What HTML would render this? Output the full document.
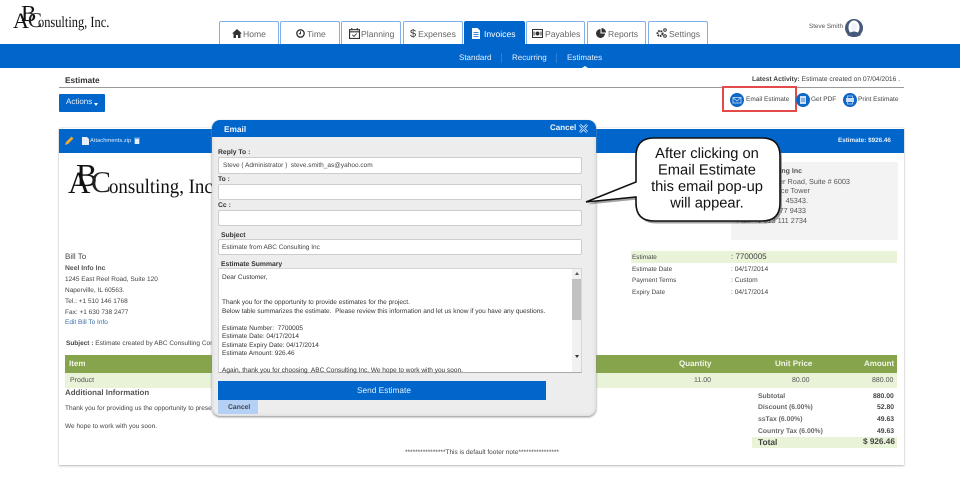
<!DOCTYPE html>
<html><head><meta charset="utf-8"><style>
html,body{margin:0;padding:0;background:#fff}
#p{position:relative;width:960px;height:497px;overflow:hidden;background:#fff;font-family:"Liberation Sans",sans-serif;color:#444;font-size:6.5px;text-rendering:geometricPrecision;filter:blur(.3px)}
#p div,#p span.a,#p svg{position:absolute}
.t{white-space:nowrap;line-height:10px}
.tab{top:21px;height:23px;box-sizing:border-box;border:1px solid #7fb0e8;border-bottom:0;border-radius:2px 2px 0 0;background:#fff;color:#666;font-size:8.6px;line-height:25px;white-space:nowrap}
.in{background:#fff;border:1px solid #cdcdcd;box-sizing:border-box;border-radius:2px;left:218px;width:364px;color:#444;font-size:6.5px;line-height:16px;padding-left:3px;white-space:nowrap}
.lb{font-weight:bold;font-size:6.8px;color:#333;white-space:nowrap;line-height:10px}
.ta{white-space:nowrap;font-size:6.5px;line-height:8.6px;color:#333}
</style></head><body><div id="p">

<!-- top logo -->
<div class="t" style="left:13px;top:10px;font:22px/22px 'Liberation Serif',serif;color:#111">A</div>
<div class="t" style="left:21px;top:2px;font:23px/23px 'Liberation Serif',serif;color:#111">B</div>
<div class="t" style="left:28px;top:9px;font:21px/22px 'Liberation Serif',serif;color:#222">C</div>
<div class="t" style="left:38px;top:13px;font:15.5px/19px 'Liberation Serif',serif;color:#111;transform:scaleX(.8);transform-origin:0 0">onsulting, Inc.</div>

<!-- tabs -->
<div class="tab" style="left:219px;width:60px"><svg style="left:12px;top:7px" width="10" height="9" viewBox="0 0 10 9"><path d="M5 0L0 4.500H1.500V9H4V6H6V9H8.500V4.500H10Z" fill="#333"/></svg><span style="margin-left:23px">Home</span></div>
<div class="tab" style="left:280px;width:60px"><svg style="left:15px;top:7px" width="9" height="9" viewBox="0 0 9 9"><circle cx="4.500" cy="4.500" r="3.700" fill="none" stroke="#333" stroke-width="1.300"/><path d="M4.500 2.300V4.700H2.800" fill="none" stroke="#333"/></svg><span style="margin-left:26px">Time</span></div>
<div class="tab" style="left:341px;width:60px"><svg style="left:7px;top:6px" width="11" height="11" viewBox="0 0 10 10"><rect x=".5" y="1.500" width="9" height="8" fill="none" stroke="#333"/><path d="M.5 3.500H9.500M2.500 0V2M7.500 0V2" stroke="#333"/><path d="M3 6.200L4.500 7.700L7 5" fill="none" stroke="#333" stroke-width=".8"/></svg><span style="margin-left:19px">Planning</span></div>
<div class="tab" style="left:403px;width:60px"><span style="margin-left:6px;font-size:11px;color:#333">$</span><span style="margin-left:2px">Expenses</span></div>
<div class="tab" style="left:464px;width:61px;background:#0066cc;border-color:#0066cc;color:#fff"><svg style="left:7px;top:6px" width="8" height="11" viewBox="0 0 8 11"><path d="M0 0H5.500L8 2.500V11H0Z" fill="#fff"/><path d="M1.500 4.500H6.500M1.500 6.500H6.500M1.500 8.500H6.500" stroke="#0066cc" stroke-width=".7"/></svg><span style="margin-left:19px">Invoices</span></div>
<div class="tab" style="left:526px;width:59px"><svg style="left:5px;top:7px" width="11" height="9" viewBox="0 0 11 9"><rect x=".5" y=".5" width="10" height="8" fill="none" stroke="#333"/><circle cx="5.500" cy="4.500" r="2" fill="#333"/><path d="M2 2.500V6.500M9 2.500V6.500" stroke="#333"/></svg><span style="margin-left:18px">Payables</span></div>
<div class="tab" style="left:587px;width:59px"><svg style="left:8px;top:6px" width="10" height="10" viewBox="0 0 10 10"><path d="M4.500 1A4.500 4.500 0 1 0 9 5.500H4.500Z" fill="#333"/><path d="M5.500 0A4.500 4.500 0 0 1 10 4.500H5.500Z" fill="#333"/></svg><span style="margin-left:20px">Reports</span></div>
<div class="tab" style="left:648px;width:60px"><svg style="left:7px;top:6px" width="11" height="10" viewBox="0 0 11 10"><circle cx="4" cy="5.500" r="2.500" fill="none" stroke="#333" stroke-width="2" stroke-dasharray="1.600 .8"/><circle cx="9" cy="2" r="1.300" fill="none" stroke="#333"/><circle cx="9" cy="8" r="1.300" fill="none" stroke="#333"/></svg><span style="margin-left:20px">Settings</span></div>

<div class="t" style="left:809px;top:22px;font-size:6.3px;color:#555">Steve Smith</div>
<svg style="left:845px;top:19px" width="18" height="18" viewBox="0 0 18 18"><circle cx="9" cy="9" r="9" fill="#46597a"/><ellipse cx="9" cy="8.500" rx="5.500" ry="7" fill="#fff"/><path d="M2 16Q9 9 16 16Q9 20 2 16Z" fill="#46597a"/><ellipse cx="9" cy="8" rx="3" ry="4" fill="#eef1f6"/></svg>

<!-- blue bar -->
<div style="left:0;top:44px;width:960px;height:24px;background:#0066cc"></div>
<div class="t" style="left:459px;top:53px;color:#e6effa;font-size:8px">Standard</div>
<div style="left:501px;top:53px;width:1px;height:10px;background:#2a80d6"></div>
<div class="t" style="left:512px;top:53px;color:#e6effa;font-size:8px">Recurring</div>
<div style="left:556px;top:53px;width:1px;height:10px;background:#2a80d6"></div>
<div class="t" style="left:567px;top:53px;color:#e6effa;font-size:8px">Estimates</div>
<div style="left:582px;top:66px;width:0;height:0;border:3px solid transparent;border-top:0;border-bottom:2px solid #fff"></div>

<!-- title row -->
<div class="t" style="left:65px;top:75px;font-size:8.3px;font-weight:bold;color:#333">Estimate</div>
<div class="t" style="left:752px;top:75px;font-size:6.7px;color:#444"><b>Latest Activity:</b> Estimate created on 07/04/2016 .</div>
<div style="left:59px;top:87px;width:845px;height:1px;background:#999"></div>
<div style="left:59px;top:94px;width:46px;height:18px;background:#0066cc;border-radius:1px"></div>
<div class="t" style="left:66px;top:97px;color:#e6effa;font-size:8px">Actions</div>
<div style="left:94px;top:103px;width:0;height:0;border:2.5px solid transparent;border-top:3px solid #fff;border-bottom:0"></div>

<!-- red box + actions -->
<div style="left:722px;top:86px;width:75px;height:26px;box-sizing:border-box;border:2px solid #e44a4a"></div>
<svg style="left:730px;top:93px" width="14" height="14" viewBox="0 0 14 14"><circle cx="7" cy="7" r="7" fill="#0e66c6"/><rect x="3" y="4.500" width="8" height="5.500" fill="none" stroke="#cfe0f5" stroke-width=".8"/><path d="M3 4.500L7 8L11 4.500" fill="none" stroke="#cfe0f5" stroke-width=".8"/></svg>
<div class="t" style="left:746px;top:95px;font-size:6.5px;color:#444">Email Estimate</div>
<svg style="left:796px;top:93px" width="14" height="14" viewBox="0 0 14 14"><circle cx="7" cy="7" r="7" fill="#0e66c6"/><rect x="4" y="3" width="6" height="8" fill="#cfe0f5"/><path d="M5 6H9M5 8H9" stroke="#0e66c6" stroke-width=".8"/></svg>
<div class="t" style="left:811px;top:95px;font-size:6.5px;color:#444">Get PDF</div>
<svg style="left:843px;top:93px" width="14" height="14" viewBox="0 0 14 14"><circle cx="7" cy="7" r="7" fill="#0e66c6"/><rect x="3" y="5" width="8" height="4" fill="#cfe0f5"/><rect x="4.500" y="3" width="5" height="8" fill="none" stroke="#cfe0f5" stroke-width=".7"/></svg>
<div class="t" style="left:858px;top:95px;font-size:6.5px;color:#444">Print Estimate</div>

<!-- card -->
<div style="left:59px;top:128px;width:845px;height:337px;background:#fff;box-shadow:0 1px 2px #bbb,0 0 1px #ccc"></div>
<div style="left:59px;top:129px;width:845px;height:24px;background:#0066cc"></div>
<svg style="left:65px;top:136px" width="9" height="9" viewBox="0 0 9 9"><path d="M0 9L1 6L6.500 .5L8.500 2.500L3 8Z" fill="#f0a830"/></svg>
<svg style="left:82px;top:137px" width="7" height="8" viewBox="0 0 7 8"><path d="M0 0H5L7 2V8H0Z" fill="#e8eef8"/></svg>
<div class="t" style="left:90px;top:136px;color:#dfeaf8;font-size:5.8px">Attachments.zip</div>
<svg style="left:134px;top:137px" width="6" height="7" viewBox="0 0 6 7"><path d="M0 1H6M1 2H5V7H1Z" fill="#e8eef8" stroke="#e8eef8" stroke-width=".6"/></svg>
<div class="t" style="left:838px;top:136px;color:#e8f0fa;font-size:6.3px;font-weight:bold">Estimate: $926.46</div>

<!-- card logo -->
<div class="t" style="left:68px;top:168px;font:31px/30px 'Liberation Serif',serif;color:#111">A</div>
<div class="t" style="left:76px;top:159px;font:32px/33px 'Liberation Serif',serif;color:#111">B</div>
<div class="t" style="left:91px;top:167px;font:30px/32px 'Liberation Serif',serif;color:#222">C</div>
<div class="t" style="left:109px;top:175px;font:20.5px/24px 'Liberation Serif',serif;color:#111;transform:scaleX(.92);transform-origin:0 0">onsulting, Inc</div>

<!-- company box -->
<div style="left:731px;top:162px;width:167px;height:78px;background:#f3f3f3"></div>
<div class="t" style="right:158px;top:167px;font-size:7px;font-weight:bold;color:#555">ABC Consulting Inc</div>
<div class="t" style="right:110px;top:177px;font-size:7.3px;color:#555">1245 Center Road, Suite # 6003</div>
<div class="t" style="right:150px;top:186px;font-size:7.3px;color:#555">Office Tower</div>
<div class="t" style="right:152px;top:196px;font-size:7.3px;color:#555">45343.</div>
<div class="t" style="right:154px;top:206px;font-size:7.3px;color:#555">Tel.: +1 513 77 9433</div>
<div class="t" style="right:153px;top:216px;font-size:7.3px;color:#555">Fax: +1 613 111 2734</div>

<!-- estimate meta -->
<div style="left:631px;top:251px;width:266px;height:12px;background:#e9f3d8"></div>
<div class="t" style="left:632px;top:253px;font-size:6.4px;color:#444">Estimate</div>
<div class="t" style="left:731px;top:252px;font-size:8px;color:#444">: 7700005</div>
<div class="t" style="left:632px;top:265px;font-size:6.4px;color:#444">Estimate Date</div>
<div class="t" style="left:731px;top:265px;font-size:6.7px;color:#444">: 04/17/2014</div>
<div class="t" style="left:632px;top:276px;font-size:6.4px;color:#444">Payment Terms</div>
<div class="t" style="left:731px;top:276px;font-size:6.7px;color:#444">: Custom</div>
<div class="t" style="left:632px;top:288px;font-size:6.4px;color:#444">Expiry Date</div>
<div class="t" style="left:731px;top:288px;font-size:6.7px;color:#444">: 04/17/2014</div>

<!-- bill to -->
<div class="t" style="left:65px;top:252px;font-size:8px;color:#444">Bill To</div>
<div class="t" style="left:65px;top:264px;font-size:6.8px;font-weight:bold;color:#555">Neel Info Inc</div>
<div class="t" style="left:65px;top:275px;font-size:6.5px">1245 East Reel Road, Suite 120</div>
<div class="t" style="left:65px;top:286px;font-size:6.5px">Naperville, IL 60563.</div>
<div class="t" style="left:65px;top:297px;font-size:6.5px">Tel.: +1 510 146 1768</div>
<div class="t" style="left:65px;top:308px;font-size:6.5px">Fax: +1 630 738 2477</div>
<div class="t" style="left:65px;top:318px;font-size:6.5px;color:#3a6ea8">Edit Bill To Info</div>
<div class="t" style="left:66px;top:339px;font-size:6.5px"><b>Subject :</b> Estimate created by ABC Consulting Corp</div>

<!-- table -->
<div style="left:65px;top:355px;width:832px;height:18px;background:#85a44c"></div>
<div style="left:65px;top:373px;width:832px;height:15px;background:#e9f3d8"></div>
<div class="t" style="left:69px;top:359px;font-size:8px;font-weight:bold;color:#f2f6ea">Item</div>
<div class="t" style="left:679px;top:359px;font-size:8px;font-weight:bold;color:#f2f6ea">Quantity</div>
<div class="t" style="left:775px;top:359px;font-size:8px;font-weight:bold;color:#f2f6ea">Unit Price</div>
<div class="t" style="left:864px;top:359px;font-size:8px;font-weight:bold;color:#f2f6ea">Amount</div>
<div class="t" style="left:70px;top:376px;font-size:7px;color:#555">Product</div>
<div class="t" style="left:694px;top:376px;font-size:7px;color:#555">11.00</div>
<div class="t" style="left:792px;top:376px;font-size:7px;color:#555">80.00</div>
<div class="t" style="left:872px;top:376px;font-size:7px;color:#555">880.00</div>

<div class="t" style="left:65px;top:388px;font-size:7.9px;font-weight:bold;color:#555">Additional Information</div>
<div class="t" style="left:65px;top:404px;font-size:6.5px">Thank you for providing us the opportunity to present</div>
<div class="t" style="left:65px;top:422px;font-size:6.5px">We hope to work with you soon.</div>

<!-- totals -->
<div style="left:752px;top:437px;width:145px;height:11px;background:#e9f3d8"></div>
<div class="t" style="left:758px;top:392px;font-size:6.8px;font-weight:bold;color:#666">Subtotal</div>
<div class="t" style="left:873px;top:392px;font-size:6.8px;font-weight:bold;color:#444">880.00</div>
<div class="t" style="left:758px;top:403px;font-size:6.8px;font-weight:bold;color:#666">Discount (6.00%)</div>
<div class="t" style="left:877px;top:403px;font-size:6.8px;font-weight:bold;color:#444">52.80</div>
<div class="t" style="left:758px;top:415px;font-size:6.8px;font-weight:bold;color:#666">ssTax (6.00%)</div>
<div class="t" style="left:877px;top:415px;font-size:6.8px;font-weight:bold;color:#444">49.63</div>
<div class="t" style="left:758px;top:427px;font-size:6.8px;font-weight:bold;color:#666">Country Tax (6.00%)</div>
<div class="t" style="left:877px;top:427px;font-size:6.8px;font-weight:bold;color:#444">49.63</div>
<div class="t" style="left:758px;top:437px;font-size:8.4px;font-weight:bold;color:#444">Total</div>
<div class="t" style="left:863px;top:437px;font-size:8.2px;font-weight:bold;color:#444">$ 926.46</div>

<div class="t" style="left:405px;top:448px;font-size:6.5px;color:#444">****************This is default footer note****************</div>

<!-- modal -->
<div style="left:212px;top:120px;width:384px;height:296px;background:#ededed;border-radius:8px;box-shadow:0 1px 2px #888,inset 0 0 3px #ccc"></div>
<div style="left:212px;top:120px;width:384px;height:17px;background:#0066cc;border-radius:8px 8px 0 0"></div>
<div class="t" style="left:224px;top:124px;font-size:8.3px;font-weight:bold;color:#eef4fc">Email</div>
<div class="t" style="left:550px;top:123px;font-size:8px;font-weight:bold;color:#eef4fc">Cancel</div>
<svg style="left:579px;top:124px" width="9" height="9" viewBox="0 0 10 10"><path d="M1 1L9 9M9 1L1 9" stroke="#cfe0f5" stroke-width="3"/><path d="M1 1L9 9M9 1L1 9" stroke="#0066cc" stroke-width="1"/></svg>

<div class="lb" style="left:218px;top:148px">Reply To :</div>
<div class="in" style="top:157px;height:17px;padding-left:4px">Steve ( Administrator )&nbsp; steve.smith_as@yahoo.com</div>
<div class="lb" style="left:218px;top:175px">To :</div>
<div class="in" style="top:184px;height:16px"></div>
<div class="lb" style="left:218px;top:201px">Cc :</div>
<div class="in" style="top:210px;height:16px"></div>
<div class="lb" style="left:221px;top:231px">Subject</div>
<div class="in" style="top:239px;height:16px">Estimate from ABC Consulting Inc</div>
<div class="lb" style="left:221px;top:260px">Estimate Summary</div>

<div style="left:218px;top:268px;width:364px;height:105px;background:#fff;border:1px solid #d5d5d5;border-bottom-color:#aaa;box-sizing:border-box"></div>
<div style="left:572px;top:269px;width:9px;height:103px;background:#f1f1f1"></div>
<div style="left:572px;top:279px;width:9px;height:41px;background:#c1c1c1"></div>
<div style="left:574.5px;top:272px;width:0;height:0;border:2px solid transparent;border-bottom:3px solid #555;border-top:0"></div>
<div style="left:574.5px;top:355px;width:0;height:0;border:2px solid transparent;border-top:3px solid #333;border-bottom:0"></div>

<div class="ta" style="left:222px;top:274px">Dear Customer,</div>
<div class="ta" style="left:222px;top:299px">Thank you for the opportunity to provide estimates for the project.</div>
<div class="ta" style="left:222px;top:308px">Below table summarizes the estimate.&nbsp; Please review this information and let us know if you have any questions.</div>
<div class="ta" style="left:222px;top:325px">Estimate Number:&nbsp; 7700005</div>
<div class="ta" style="left:222px;top:333px">Estimate Date: 04/17/2014</div>
<div class="ta" style="left:222px;top:342px">Estimate Expiry Date: 04/17/2014</div>
<div class="ta" style="left:222px;top:350px">Estimate Amount: 926.46</div>
<div class="ta" style="left:222px;top:367px">Again, thank you for choosing&nbsp; ABC Consulting Inc. We hope to work with you soon.</div>

<div style="left:218px;top:381px;width:328px;height:19px;background:#0066cc"></div>
<div class="t" style="left:357px;top:385px;font-size:8.3px;color:#e6effa">Send Estimate</div>
<div style="left:218px;top:400px;width:40px;height:14px;background:#b5d0f5;border-radius:1px"></div>
<div class="t" style="left:228px;top:403px;font-size:6.8px;font-weight:bold;color:#444">Cancel</div>

<!-- callout -->
<svg style="left:580px;top:130px" width="210" height="100" viewBox="0 0 210 100">
<path d="M74 8H182Q200 8 200 26V73Q200 91 182 91H74Q56 91 56 73V67L6 72L56 52V26Q56 8 74 8Z" fill="#555" opacity=".55" transform="translate(2,2.5)"/>
<path d="M74 8H182Q200 8 200 26V73Q200 91 182 91H74Q56 91 56 73V67L6 72L56 52V26Q56 8 74 8Z" fill="#fff" stroke="#111" stroke-width="1.600"/>
<text x="127" y="28" text-anchor="middle" font-family="Liberation Sans, sans-serif" font-size="14.700" fill="#111">After clicking on</text>
<text x="127" y="44.500" text-anchor="middle" font-family="Liberation Sans, sans-serif" font-size="14.700" fill="#111">Email Estimate</text>
<text x="127" y="61" text-anchor="middle" font-family="Liberation Sans, sans-serif" font-size="14.700" fill="#111">this email pop-up</text>
<text x="127" y="77.500" text-anchor="middle" font-family="Liberation Sans, sans-serif" font-size="14.700" fill="#111">will appear.</text>
</svg>

</div></body></html>
